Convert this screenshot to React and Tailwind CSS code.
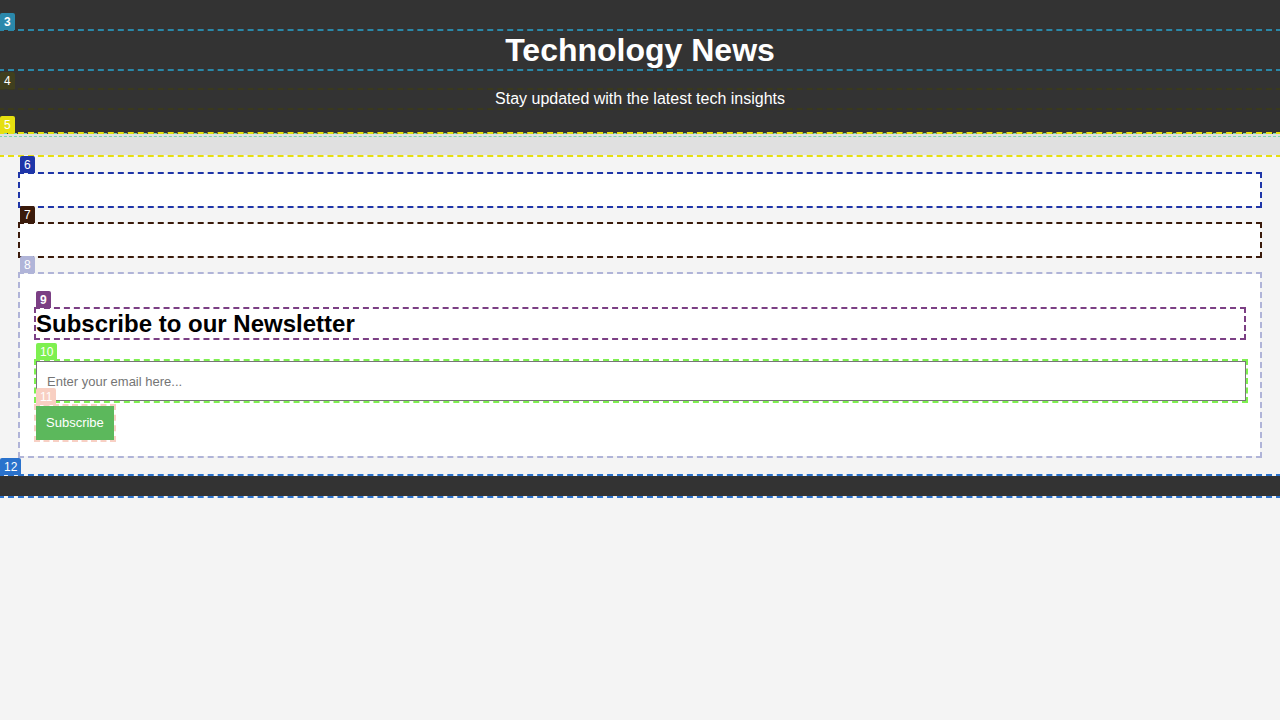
import React from "react";

// Debug tag drawn above the outlined element
function Tag({ n, color }) {
  return (
    <span
      className="absolute left-0 bottom-[calc(100%+1px)] z-10 h-[17px] rounded-t-[2px] px-[4px] text-[12px] leading-[18px] text-white"
      style={{ backgroundColor: color }}
    >
      {n}
    </span>
  );
}

export default function App() {
  return (
    <div className="min-h-screen bg-[#f4f4f4] font-['Liberation_Sans',Arial,sans-serif] text-black">
      {/* Header */}
      <header className="flex flex-col gap-[21px] bg-[#333333] pb-[26px] pt-[31px] text-center text-white">
        <h1 className="relative h-[38px] text-[32px] font-bold leading-[38px] outline-2 outline-dashed outline-[#2a88a8]">
          <Tag n="3" color="#2a88ab" />
          Technology News
        </h1>
        <p className="relative h-[18px] text-[16px] leading-[18px] outline-2 outline-dashed outline-[#3a3a1c]">
          <Tag n="4" color="#403f1e" />
          Stay updated with the latest tech insights
        </p>
      </header>

      {/* Nav */}
      <nav className="relative h-[21px] bg-[#e0e0e0] outline-2 outline-dashed outline-[#e6df10]">
        <Tag n="5" color="#e6df10" />
        <div className="h-0 pt-[2px] outline-1 outline-dashed outline-[#7ad8b0]" />
      </nav>

      {/* Main */}
      <main className="flex flex-col gap-[18px] px-[20px] pt-[19px]">
        <section className="relative h-[32px] bg-white outline-2 outline-dashed outline-[#1e35a8]">
          <Tag n="6" color="#1e35a8" />
        </section>
        <section className="relative h-[32px] bg-white outline-2 outline-dashed outline-[#3a1a0a]">
          <Tag n="7" color="#3a1a0a" />
        </section>
        <section className="relative flex flex-col items-start bg-white px-[16px] pb-[16px] pt-[35px] outline-2 outline-dashed outline-[#b0b4d8]">
          <Tag n="8" color="#b0b4d8" />
          <h2 className="relative mb-[23px] h-[29px] w-full text-[24px] font-bold leading-[29px] outline-2 outline-dashed outline-[#7b3f84]">
            <Tag n="9" color="#7b3f84" />
            Subscribe to our Newsletter
          </h2>
          <div className="relative mb-[5px] w-[calc(100%+2px)] outline-2 outline-dashed outline-[#7ef050]">
            <Tag n="10" color="#7ef050" />
            <input
              type="email"
              placeholder="Enter your email here..."
              className="block h-[40px] w-full border border-[#767676] bg-white px-[10px] text-[13px] placeholder:text-[#757575]"
            />
          </div>
          <div className="relative outline-2 outline-dashed outline-[#f8d0c4]">
            <Tag n="11" color="#f8cfc2" />
            <button className="block h-[34px] bg-[#5cb85c] px-[10px] text-[13px] text-white">
              Subscribe
            </button>
          </div>
        </section>
      </main>

      {/* Footer */}
      <footer className="relative mt-[20px] h-[20px] bg-[#333333] outline-2 outline-dashed outline-[#2a72cc]">
        <Tag n="12" color="#2a72cc" />
      </footer>
    </div>
  );
}
